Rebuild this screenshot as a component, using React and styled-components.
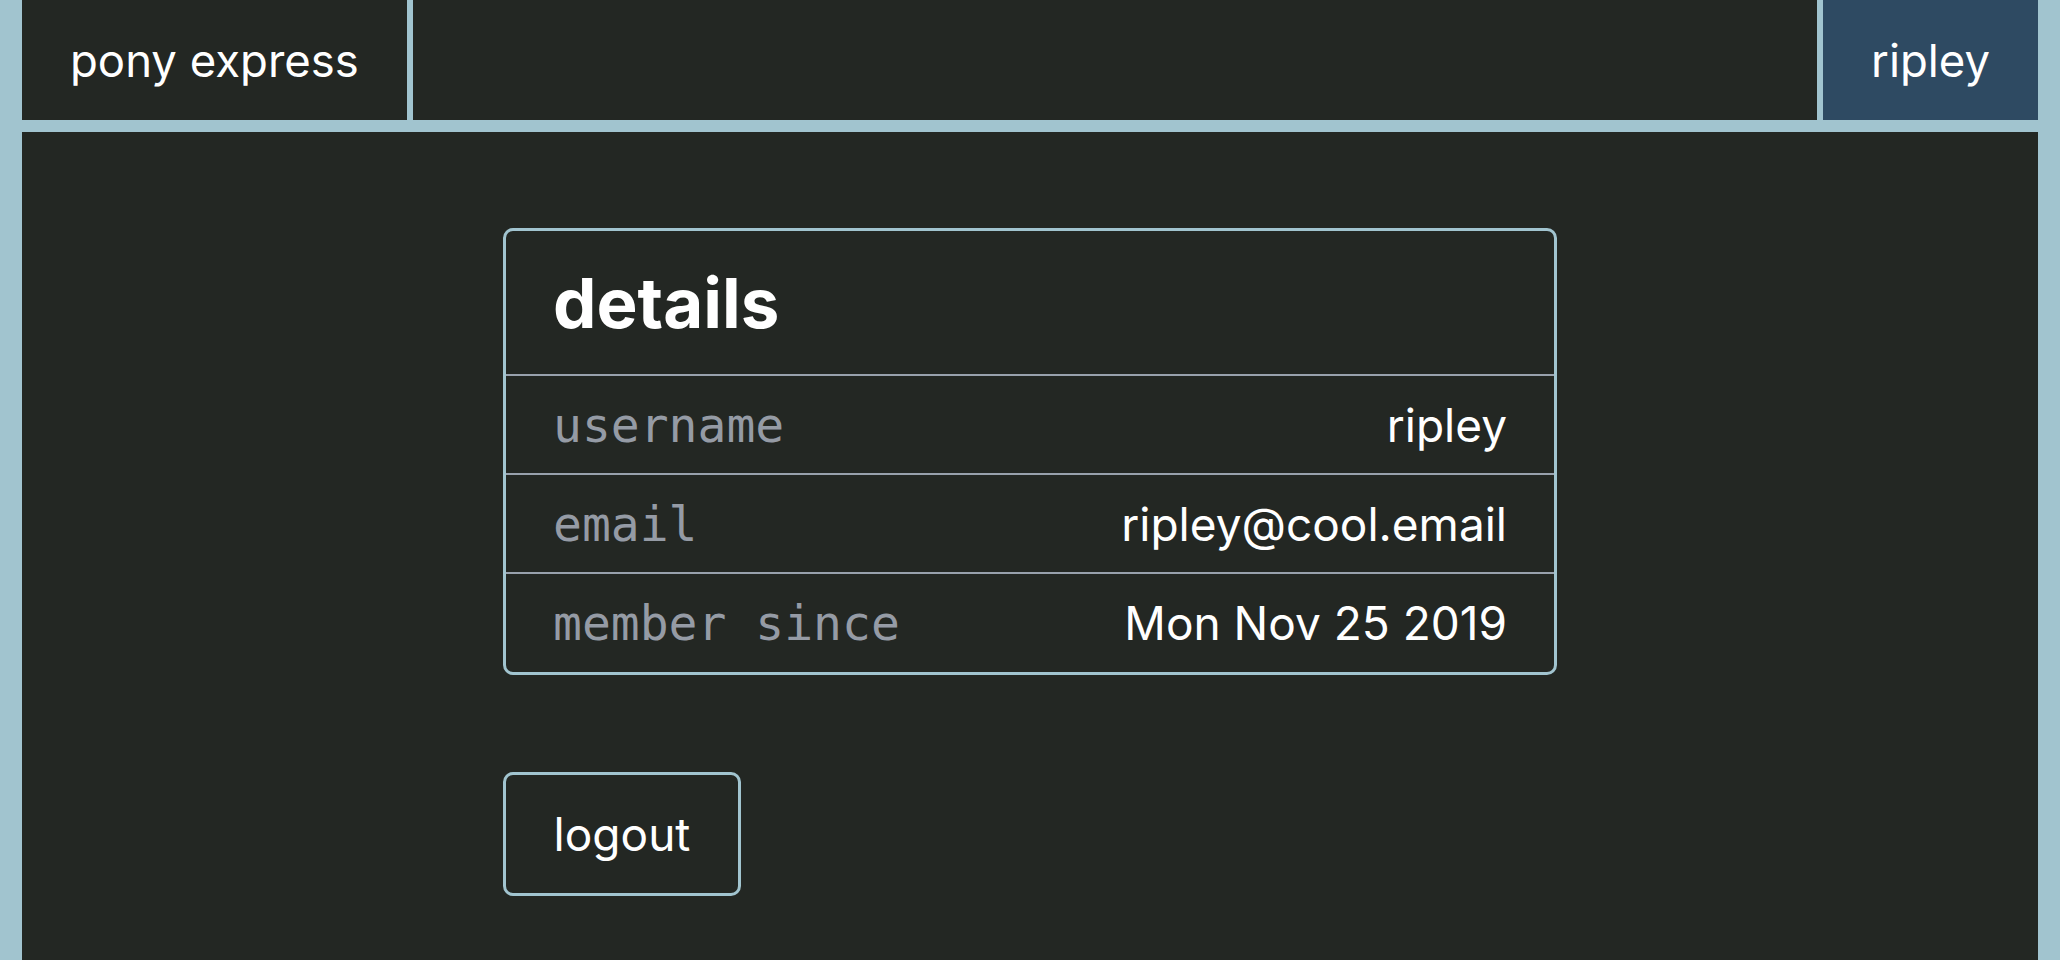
import React from "react";
import styled, { createGlobalStyle } from "styled-components";

const Global = createGlobalStyle`
  html, body { margin: 0; padding: 0; }
  body {
    background: #a1c4cf;
    font-family: Inter, "Noto Sans", sans-serif;
    color: #ffffff;
  }
`;

const Page = styled.div`
  padding: 0 22px;
  display: flex;
  flex-direction: column;
  gap: 12px;
  min-height: 960px;
  box-sizing: border-box;
`;

const Header = styled.header`
  display: flex;
  gap: 6px;
  height: 120px;
`;

const NavItem = styled.div`
  display: flex;
  align-items: center;
  padding: 0 48px;
  font-size: 45.5px;
  background: ${(p) => (p.$active ? "#2e4a62" : "#232723")};
  flex: ${(p) => (p.$grow ? 1 : "none")};
`;

const Main = styled.main`
  flex: 1;
  background: #232723;
  padding: 96px 0;
  display: flex;
  justify-content: center;
`;

const Column = styled.div`
  width: 1054px;
  display: flex;
  flex-direction: column;
  align-items: flex-start;
  gap: 97px;
`;

const Card = styled.section`
  width: 100%;
  box-sizing: border-box;
  border: 3px solid #a1c4cf;
  border-radius: 10px;
  overflow: hidden;
`;

const CardTitle = styled.h2`
  margin: 0;
  height: 145px;
  box-sizing: border-box;
  display: flex;
  align-items: center;
  padding: 0 47px;
  font-size: 69px;
  font-weight: 700;
  border-bottom: 2px solid #98a1ad;
`;

const Row = styled.div`
  display: flex;
  justify-content: space-between;
  align-items: center;
  height: ${(p) => (p.$last ? "98px" : "99px")};
  box-sizing: border-box;
  padding: 0 47px;
  border-bottom: ${(p) => (p.$last ? "none" : "2px solid #98a1ad")};
`;

const Label = styled.span`
  font-family: "DejaVu Sans Mono", "Liberation Mono", monospace;
  font-size: 48px;
  color: #959ba5;
`;

const Value = styled.span`
  font-size: 46px;
`;

const Button = styled.button`
  font-family: Inter, "Noto Sans", sans-serif;
  font-size: 46px;
  color: #ffffff;
  background: transparent;
  border: 3px solid #a1c4cf;
  border-radius: 10px;
  width: 238px;
  height: 124px;
  padding: 0;
  display: flex;
  align-items: center;
  justify-content: center;
  cursor: pointer;
`;

const rows = [
  ["username", "ripley"],
  ["email", "ripley@cool.email"],
  ["member since", "Mon Nov 25 2019"],
];

export default function App() {
  return (
    <>
      <Global />
      <Page>
        <Header>
          <NavItem>pony express</NavItem>
          <NavItem $grow />
          <NavItem $active>ripley</NavItem>
        </Header>
        <Main>
          <Column>
            <Card>
              <CardTitle>details</CardTitle>
              {rows.map(([k, v], i) => (
                <Row key={k} $last={i === rows.length - 1}>
                  <Label>{k}</Label>
                  <Value>{v}</Value>
                </Row>
              ))}
            </Card>
            <Button>logout</Button>
          </Column>
        </Main>
      </Page>
    </>
  );
}
